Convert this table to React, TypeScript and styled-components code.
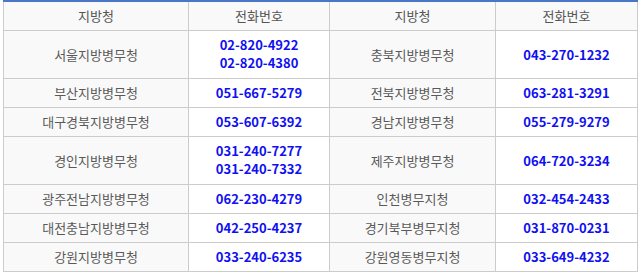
import React from 'react';
import styled, { createGlobalStyle } from 'styled-components';

const GlobalStyle = createGlobalStyle`
    body {
        margin: 0;
        background: #ffffff;
        font-family: 'Noto Sans CJK KR', 'Noto Sans', sans-serif;
    }
`;

const Wrapper = styled.div`
    padding: 0 4px 0 3px;
`;

const Table = styled.table`
    width: 634px;
    border-collapse: collapse;
    table-layout: fixed;
    border-top: 2px solid #4a76c6;
    font-size: 13px;
    line-height: 18px;
`;

const HeadCell = styled.th`
    background: #f9f9f9;
    color: #555555;
    font-weight: normal;
    border: 1px solid #cccccc;
    border-top: none;
    padding: 5px 4px;
    text-align: center;
`;

const NameCell = styled.td`
    background: #f9f9f9;
    color: #595959;
    border: 1px solid #cccccc;
    padding: 5px 4px;
    text-align: center;
`;

const PhoneCell = styled.td<{ tall?: boolean }>`
    background: #ffffff;
    color: #1010f0;
    font-weight: bold;
    border: 1px solid #cccccc;
    padding: ${(props) => (props.tall ? '5px 4px 6px' : '5px 4px')};
    text-align: center;
`;

const PhoneLine = styled.div`
    line-height: 18px;
`;

const rows = [
    { a: '서울지방병무청', ap: ['02-820-4922', '02-820-4380'], b: '충북지방병무청', bp: ['043-270-1232'] },
    { a: '부산지방병무청', ap: ['051-667-5279'], b: '전북지방병무청', bp: ['063-281-3291'] },
    { a: '대구경북지방병무청', ap: ['053-607-6392'], b: '경남지방병무청', bp: ['055-279-9279'] },
    { a: '경인지방병무청', ap: ['031-240-7277', '031-240-7332'], b: '제주지방병무청', bp: ['064-720-3234'] },
    { a: '광주전남지방병무청', ap: ['062-230-4279'], b: '인천병무지청', bp: ['032-454-2433'] },
    { a: '대전충남지방병무청', ap: ['042-250-4237'], b: '경기북부병무지청', bp: ['031-870-0231'] },
    { a: '강원지방병무청', ap: ['033-240-6235'], b: '강원영동병무지청', bp: ['033-649-4232'] },
];

const Phones = ({ list }: { list: string[] }) => (
    <PhoneCell tall={list.length > 1}>
        {list.map((p) => (
            <PhoneLine key={p}>{p}</PhoneLine>
        ))}
    </PhoneCell>
);

export default function App() {
    return (
        <>
            <GlobalStyle />
            <Wrapper>
                <Table>
                    <colgroup>
                        <col style={{ width: 185 }} />
                        <col style={{ width: 141 }} />
                        <col style={{ width: 166 }} />
                        <col style={{ width: 142 }} />
                    </colgroup>
                    <thead>
                        <tr>
                            <HeadCell>지방청</HeadCell>
                            <HeadCell>전화번호</HeadCell>
                            <HeadCell>지방청</HeadCell>
                            <HeadCell>전화번호</HeadCell>
                        </tr>
                    </thead>
                    <tbody>
                        {rows.map((r) => (
                            <tr key={r.a}>
                                <NameCell>{r.a}</NameCell>
                                <Phones list={r.ap} />
                                <NameCell>{r.b}</NameCell>
                                <Phones list={r.bp} />
                            </tr>
                        ))}
                    </tbody>
                </Table>
            </Wrapper>
        </>
    );
}
